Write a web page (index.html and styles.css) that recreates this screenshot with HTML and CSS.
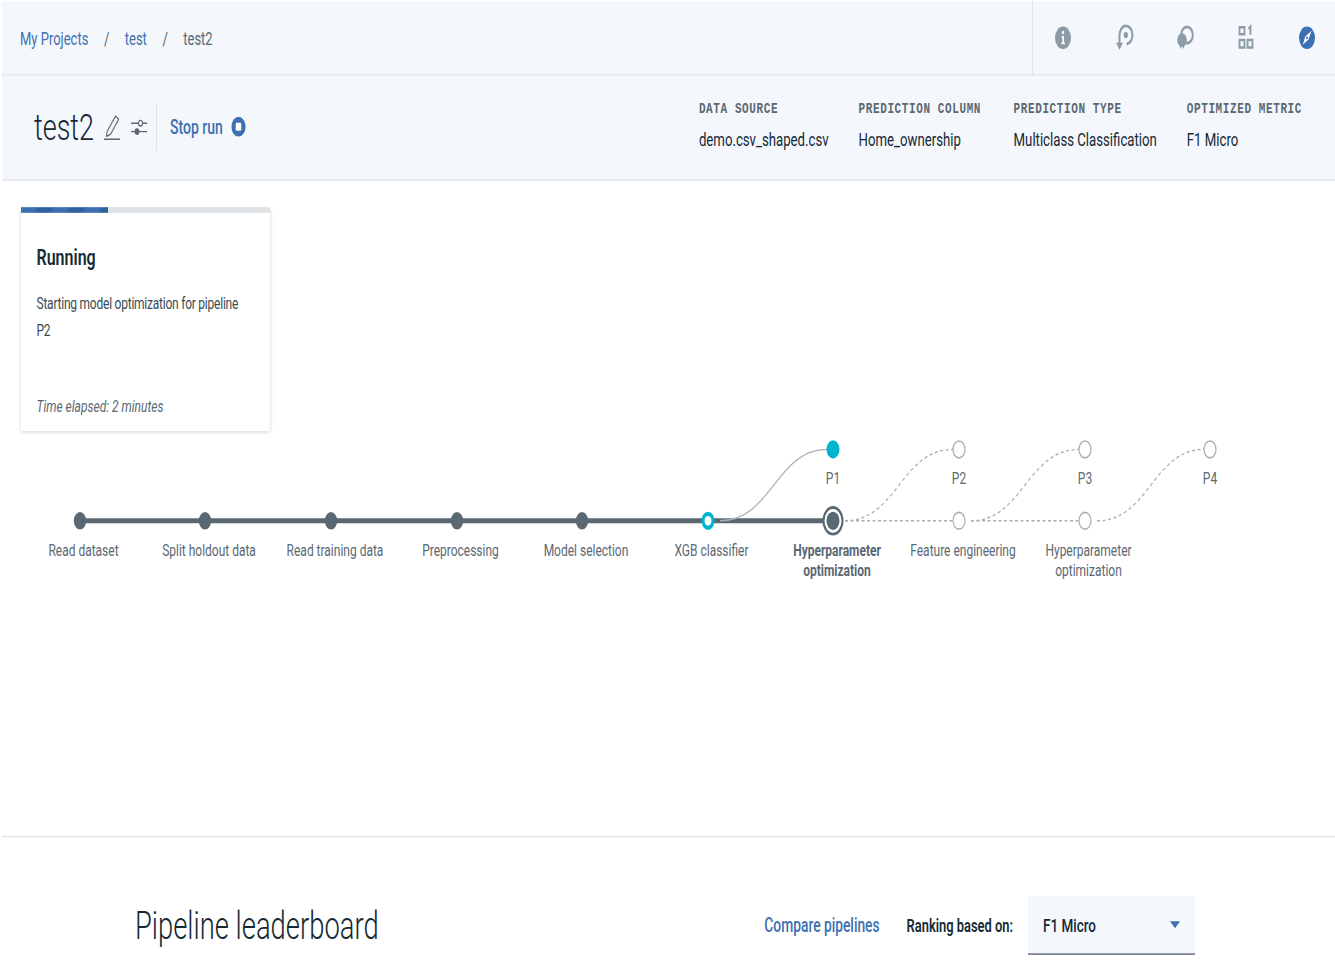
FILE: index.html
```html
<!DOCTYPE html>
<html>
	<head>
		<meta charset="utf-8">
		<title>test2</title>
		<link rel="stylesheet" href="styles.css">
	</head>
	<body>
		<div class="page">
			<!-- top bar -->
			<div class="topbar">
				<div class="crumbs">
					<a class="link">My Projects</a>
					<span class="crumb-sep">/</span>
					<a class="link">test</a>
					<span class="crumb-sep">/</span>
					<span class="crumb-now">test2</span>
				</div>
				<div class="tools">
					<svg class="tool" viewBox="0 0 20 20">
						<circle cx="10" cy="10" r="8" fill="#8c9ba5"/>
						<circle cx="10" cy="6.2" r="1.2" fill="#fff"/>
						<path d="M8.6 8.8h2.4v4.6h1v1.2H8.4v-1.2h1v-3.4h-.8z" fill="#fff"/>
					</svg>
					<svg class="tool" viewBox="0 0 20 20">
						<path d="M12.5 14.5A6.5 6.5 0 1 0 5.5 8V15" fill="none" stroke="#8c9ba5" stroke-width="2"/>
						<path d="M2 13.5L5.5 18.5 9 13.5z" fill="#8c9ba5"/>
						<circle cx="11.8" cy="8" r="2.2" fill="#8c9ba5"/>
					</svg>
					<svg class="tool" viewBox="0 0 20 20">
						<circle cx="12" cy="8" r="5.8" fill="none" stroke="#8c9ba5" stroke-width="2"/>
						<circle cx="7" cy="11.5" r="4.8" fill="#8c9ba5"/>
						<path d="M4.5 14l.5 4 2-2 2 2 .5-4z" fill="#8c9ba5"/>
					</svg>
					<svg class="tool" viewBox="0 0 20 20">
						<path d="M3.5 2.5h5v5h-5zM3.5 11.5h5v5.5h-5zM11.5 11.5h5v5.5h-5z" fill="none" stroke="#8c9ba5" stroke-width="1.8"/>
						<path d="M12.5 3.5l2-1.5v6" fill="none" stroke="#8c9ba5" stroke-width="1.8"/>
					</svg>
					<svg class="tool" viewBox="0 0 20 20">
						<circle cx="10" cy="10" r="8" fill="#3d70b2"/>
						<path d="M14.5 5L8.3 9 5.8 15l5.8-4z" fill="#fff"/>
						<circle cx="10" cy="10" r="1" fill="#3d70b2"/>
					</svg>
				</div>
			</div>

			<!-- run header -->
			<div class="runbar">
				<h1 class="run-name">test2</h1>
				<svg class="run-icon" viewBox="0 0 20 20">
					<path d="M4 13L12.5 2l3.2 2.2L7.5 15l-4 1.3z" fill="none" stroke="#5a6872"/>
					<path d="M1 18.5h16" stroke="#5a6872"/>
				</svg>
				<svg class="run-icon" viewBox="0 0 20 20">
					<path d="M2 7h7.5M13.5 7H18M2 13h4M10 13h8" stroke="#5a6872"/>
					<circle cx="11.5" cy="7" r="2" fill="none" stroke="#5a6872"/>
					<circle cx="8" cy="13" r="2.4" fill="#5a6872"/>
				</svg>
				<div class="run-action">
					<a class="link link-strong">Stop run</a>
					<svg class="stop-icon" viewBox="0 0 16 16">
						<circle cx="8" cy="8" r="7.5" fill="#3d70b2"/>
						<rect x="5" y="5" width="6" height="6" rx="1" fill="#fff"/>
					</svg>
				</div>
				<div class="meta-list">
					<div class="meta">
						<div class="meta-label">DATA SOURCE</div>
						<div class="meta-value">demo.csv_shaped.csv</div>
					</div>
					<div class="meta meta-wide">
						<div class="meta-label">PREDICTION COLUMN</div>
						<div class="meta-value">Home_ownership</div>
					</div>
					<div class="meta">
						<div class="meta-label">PREDICTION TYPE</div>
						<div class="meta-value">Multiclass Classification</div>
					</div>
					<div class="meta">
						<div class="meta-label">OPTIMIZED METRIC</div>
						<div class="meta-value">F1 Micro</div>
					</div>
				</div>
			</div>

			<!-- status card and pipeline graph -->
			<div class="progress">
				<div class="card">
					<div class="card-track"><div class="card-fill" style="width: 35%"></div></div>
					<div class="card-body">
						<div class="card-title">Running</div>
						<div class="card-text">Starting model optimization for pipeline P2</div>
						<div class="card-time">Time elapsed: 2 minutes</div>
					</div>
				</div>

				<svg class="graph" viewBox="2 310 1333 110">
					<path class="edge-main" d="M80 372H833"/>
					<path class="edge" d="M720 372C772 372 776 321 827 321"/>
					<path class="edge-todo" d="M845 372H953M971 372H1079"/>
					<path class="edge-todo" d="M845 372C897 372 901 321 953 321"/>
					<path class="edge-todo" d="M971 372C1023 372 1027 321 1079 321"/>
					<path class="edge-todo" d="M1097 372C1149 372 1153 321 1204 321"/>

					<circle class="node-done" cx="80" cy="372" r="6.2"/>
					<circle class="node-done" cx="205" cy="372" r="6.2"/>
					<circle class="node-done" cx="331" cy="372" r="6.2"/>
					<circle class="node-done" cx="457" cy="372" r="6.2"/>
					<circle class="node-done" cx="582" cy="372" r="6.2"/>
					<circle class="node-xgb" cx="708" cy="372" r="5"/>
					<circle class="node-ring" cx="833" cy="372" r="9.5"/>
					<circle class="node-done" cx="833" cy="372" r="6.5"/>
					<circle class="node-todo" cx="959" cy="372" r="6"/>
					<circle class="node-todo" cx="1085" cy="372" r="6"/>
					<circle class="node-p1" cx="833" cy="321" r="6.5"/>
					<circle class="node-todo" cx="959" cy="321" r="6"/>
					<circle class="node-todo" cx="1085" cy="321" r="6"/>
					<circle class="node-todo" cx="1210" cy="321" r="6"/>

					<text class="label" x="833" y="346">P1</text>
					<text class="label" x="959" y="346">P2</text>
					<text class="label" x="1085" y="346">P3</text>
					<text class="label" x="1210" y="346">P4</text>

					<text class="label" x="83.5" y="397.5">Read dataset</text>
					<text class="label" x="209" y="397.5">Split holdout data</text>
					<text class="label" x="335" y="397.5">Read training data</text>
					<text class="label" x="460.5" y="397.5">Preprocessing</text>
					<text class="label" x="586" y="397.5">Model selection</text>
					<text class="label" x="711.5" y="397.5">XGB classifier</text>
					<text class="label label-now" x="837" y="397.5">Hyperparameter</text>
					<text class="label label-now" x="837" y="411.5">optimization</text>
					<text class="label" x="963" y="397.5">Feature engineering</text>
					<text class="label" x="1088.5" y="397.5">Hyperparameter</text>
					<text class="label" x="1088.5" y="411.5">optimization</text>
				</svg>
			</div>

			<!-- leaderboard -->
			<div class="board">
				<h2 class="board-title">Pipeline leaderboard</h2>
				<a class="link link-strong board-link">Compare pipelines</a>
				<span class="rank-label">Ranking based on:</span>
				<div class="rank-select">
					<span>F1 Micro</span>
					<span class="caret"></span>
				</div>
			</div>
		</div>
	</body>
</html>
```

FILE: styles.css
```css
* {
	margin: 0;
	padding: 0;
	box-sizing: border-box;
}

html,
body {
	height: 960px;
	overflow: hidden;
	background-color: #fff;
}

body {
	font-family: "Roboto", "Liberation Sans", sans-serif;
	color: #152935;
	font-size: 14px;
}

/* the whole screen is drawn taller than wide */
.page {
	width: 1335px;
	padding: 1px 0 0 2px;
	transform: scaleY(1.4);
	transform-origin: 0 0;
}

.link {
	color: #3d70b2;
}

.link-strong {
	font-weight: 500;
}

/* top bar */
.topbar {
	display: flex;
	align-items: stretch;
	height: 53px;
	background-color: #f4f7fb;
	border-bottom: 1px solid #dfe3e6;
}

.crumbs {
	display: flex;
	align-items: center;
	padding-left: 18px;
	font-size: 13px;
}

.crumb-sep {
	margin: 0 15.5px;
	color: #5a6872;
}

.crumb-now {
	color: #5a6872;
}

.tools {
	display: flex;
	align-items: center;
	gap: 41px;
	margin-left: auto;
	padding: 0 18px 0 20px;
	border-left: 1px solid #dfe3e6;
}

.tool {
	width: 20px;
	height: 20px;
}

/* run header */
.runbar {
	display: flex;
	align-items: center;
	height: 75px;
	padding: 0 33px 0 32px;
	background-color: #f4f7fb;
	border-bottom: 1px solid #dfe3e6;
}

.run-name {
	margin-right: 9px;
	font-size: 27px;
	font-weight: 300;
}

.run-icon {
	width: 20px;
	height: 20px;
	margin-right: 6px;
}

.run-action {
	display: flex;
	align-items: center;
	height: 34px;
	margin-left: 1px;
	padding-left: 13px;
	border-left: 1px solid #dfe3e6;
}

.stop-icon {
	width: 15px;
	height: 15px;
	margin-top: -1px;
	margin-left: 8px;
}

.meta-list {
	display: flex;
	gap: 30px;
	margin-left: auto;
	padding-bottom: 3px;
}

.meta-wide {
	min-width: 125px;
}

.meta-label {
	margin-bottom: 7.4px;
	font-family: "Liberation Mono", monospace;
	font-size: 11px;
	font-weight: 700;
	letter-spacing: .6px;
	color: #5a6872;
}

.meta-value {
	font-size: 13.2px;
}

/* status card and pipeline graph */
.progress {
	height: 468px;
	padding-top: 19px;
}

.card {
	display: flex;
	flex-direction: column;
	width: 249px;
	height: 160px;
	margin-left: 19px;
	background-color: #fff;
	box-shadow: 0 1px 3px rgba(0, 0, 0, .18);
}

.card-track {
	height: 4px;
	background-color: #dfe3e6;
}

.card-fill {
	height: 100%;
	background-image: repeating-linear-gradient(120deg, #3d70b2 0, #3d70b2 14px, #30619f 14px, #30619f 28px);
}

.card-body {
	display: flex;
	flex-direction: column;
	flex: 1;
	padding: 21.5px 15.5px 11px;
}

.card-title {
	margin-bottom: 15.5px;
	font-size: 16px;
	font-weight: 600;
}

.card-text {
	width: 217px;
	font-size: 12px;
	line-height: 18.5px;
	letter-spacing: -.23px;
	color: #394b54;
}

.card-time {
	margin-top: auto;
	font-size: 12px;
	font-style: italic;
	color: #5a6872;
}

.graph {
	display: block;
	width: 1333px;
	height: 110px;
	margin-top: 2px;
}

.edge-main {
	fill: none;
	stroke: #5a6872;
	stroke-width: 3.5;
}

.edge {
	fill: none;
	stroke: #a5b0b8;
	stroke-width: 1;
}

.edge-todo {
	fill: none;
	stroke: #a5b0b8;
	stroke-width: 1;
	stroke-dasharray: 3 2.5;
}

.node-done {
	fill: #5a6872;
}

.node-xgb {
	fill: #fff;
	stroke: #00b4d0;
	stroke-width: 3;
}

.node-ring {
	fill: #fff;
	stroke: #5a6872;
	stroke-width: 2;
}

.node-todo {
	fill: #fff;
	stroke: #a5b0b8;
	stroke-width: 1.2;
}

.node-p1 {
	fill: #00b4d0;
}

.label {
	font-size: 12px;
	fill: #5a6872;
	text-anchor: middle;
}

.label-now {
	font-weight: 700;
}

/* leaderboard */
.board {
	display: flex;
	align-items: center;
	height: 85px;
	padding: 42px 140px 0 133px;
	border-top: 1px solid #dfe3e6;
}

.board-title {
	margin-top: 2px;
	margin-right: auto;
	font-size: 27.4px;
	font-weight: 300;
}

.board-link {
	font-size: 13.8px;
}

.rank-label {
	margin-left: 27px;
	margin-right: 15px;
	font-size: 12.9px;
	font-weight: 600;
}

.rank-select {
	display: flex;
	align-items: center;
	justify-content: space-between;
	width: 167px;
	height: 42px;
	padding: 0 15px;
	background-color: #f4f7fb;
	border-bottom: 1px solid #5a6872;
	font-size: 13.5px;
	font-weight: 500;
}

.caret {
	border-top: 5px solid #3d70b2;
	border-left: 5px solid transparent;
	border-right: 5px solid transparent;
}
```
